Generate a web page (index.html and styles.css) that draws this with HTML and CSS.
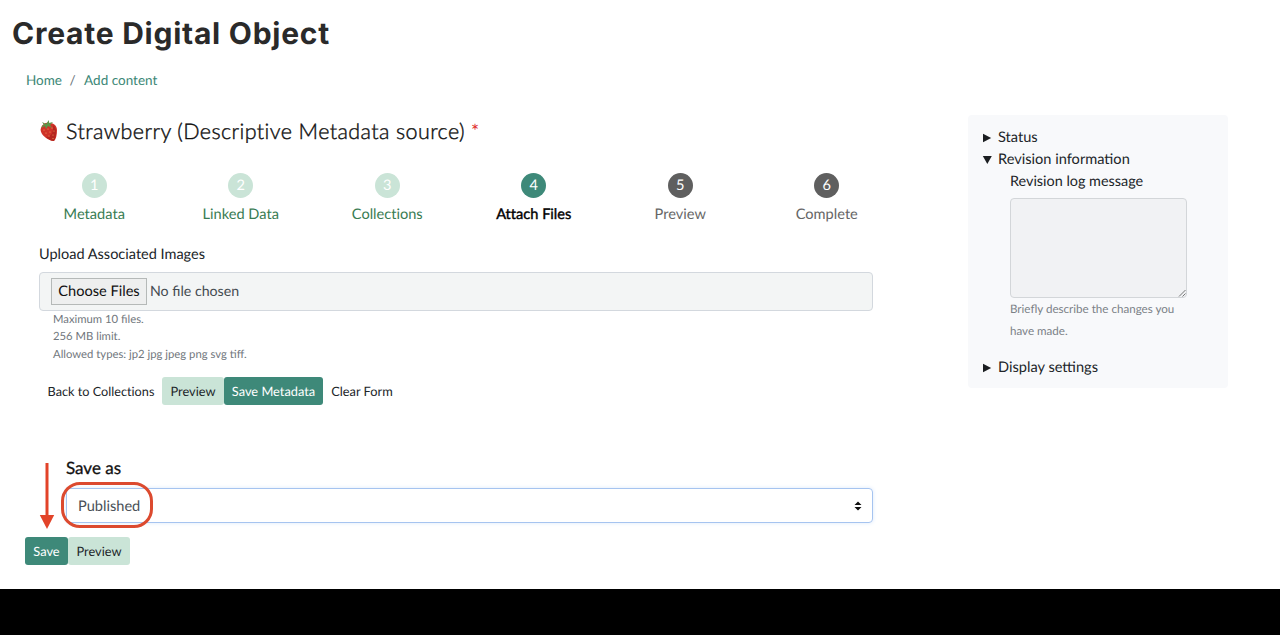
FILE: index.html
```html
<!DOCTYPE html>
<html lang="en">
<head>
<meta charset="utf-8">
<title>Create Digital Object</title>
<link rel="stylesheet" href="styles.css">
</head>
<body>
<div class="page">
  <h1 class="title"><span>Create Digital Object</span></h1>
  <nav class="breadcrumb"><a class="crumb-home">Home</a><span class="slash">/</span><a class="crumb-add">Add content</a></nav>
  <div class="layout">
    <main class="main">
      <h2 class="heading">
        <svg class="berry" width="20" height="22" viewBox="0 0 20 22">
          <path d="M2 8C3 4 7 2 11 3c4 0 7 3 7 7 0 5-1 9-3 11-4 0-9-3-12-7-1-2-2-4-1-6z" fill="#cf3328"/>
          <path d="M14 5c4 3 4 10 1 16-3 0-6-2-8-4 5 0 8-5 7-12z" fill="#b5261f"/>
          <path d="M1 5l4 0-2-3 4 2 3-4 0 3 4-1-3 3 2 3-4-2-2 3-1-3-4 2 2-3z" fill="#5c9448"/>
          <g fill="#f0a25a"><circle cx="5" cy="10" r=".6"/><circle cx="9" cy="9" r=".6"/><circle cx="13" cy="8" r=".6"/><circle cx="7" cy="13" r=".6"/><circle cx="11" cy="12" r=".6"/><circle cx="15" cy="11" r=".6"/><circle cx="10" cy="16" r=".6"/><circle cx="14" cy="15" r=".6"/><circle cx="14" cy="18.500" r=".6"/></g>
        </svg>
        <span class="heading-text">Strawberry (Descriptive Metadata source)</span><span class="required">*</span>
      </h2>
      <ol class="steps">
        <li class="step done"><span class="dot">1</span><span class="label">Metadata</span></li>
        <li class="step done"><span class="dot">2</span><span class="label">Linked Data</span></li>
        <li class="step done"><span class="dot">3</span><span class="label">Collections</span></li>
        <li class="step current"><span class="dot">4</span><span class="label">Attach Files</span></li>
        <li class="step"><span class="dot">5</span><span class="label">Preview</span></li>
        <li class="step"><span class="dot">6</span><span class="label">Complete</span></li>
      </ol>
      <div class="upload-label"><span>Upload Associated Images</span></div>
      <div class="file"><span class="choose">Choose Files</span><span class="nofile">No file chosen</span></div>
      <div class="hints"><div>Maximum 10 files.</div><div>256 MB limit.</div><div>Allowed types: jp2 jpg jpeg png svg tiff.</div></div>
      <div class="actions">
        <span class="btn back">Back to Collections</span><span class="btn soft preview-a">Preview</span><span class="btn solid save-meta">Save Metadata</span><span class="btn clear">Clear Form</span>
      </div>
      <div class="save-as"><span>Save as</span></div>
      <div class="select"><span class="value">Published</span>
        <svg width="8" height="10" viewBox="0 0 8 10"><path d="M4 .5L7.500 4H.5zM4 9.500L.5 6h7z" fill="#111"/></svg>
        <div class="ring"></div>
      </div>
    </main>
    <aside class="side">
      <div class="row"><svg class="tri" width="10" height="10" viewBox="0 0 10 10"><path d="M1 .8L9.200 5 1 9.200z"/></svg><span class="status">Status</span></div>
      <div class="row"><svg class="tri" width="10" height="10" viewBox="0 0 10 10"><path d="M.8 1h9L5.300 9z"/></svg><span>Revision information</span></div>
      <div class="revision">
        <div class="log-label">Revision log message</div>
        <div class="textarea"><svg width="8" height="8" viewBox="0 0 8 8"><path d="M1 7.500L7.500 1M4.500 7.500l3-3" stroke="#555" stroke-width=".8" fill="none"/></svg></div>
        <div class="help">Briefly describe the changes you<br>have made.</div>
      </div>
      <div class="row"><svg class="tri" width="10" height="10" viewBox="0 0 10 10"><path d="M1 .8L9.200 5 1 9.200z"/></svg><span class="display">Display settings</span></div>
    </aside>
  </div>
  <div class="footer-actions"><span class="btn solid save">Save</span><span class="btn soft preview-b">Preview</span></div>
  <svg class="arrow" width="16" height="68" viewBox="0 0 16 68"><path d="M8 1v53" stroke="#e24329" stroke-width="3"/><path d="M.8 53h14.400L8 67z" fill="#e24329"/></svg>
</div>
<div class="bottom"></div>
</body>
</html>
```
FILE: styles.css
```css
* { box-sizing: border-box; }
body { margin: 0; width: 1280px; height: 635px; overflow: hidden; background: #fff; color: #212529; font: 14.6px/22px Lato, sans-serif; text-rendering: geometricPrecision; display: flex; flex-direction: column; }
.page { height: 589px; flex: none; position: relative; white-space: nowrap; }
.bottom { flex: 1; background: #000; }
.title { margin: 0; padding: 14px 0 0 12px; font: 700 30px/40px Inter, sans-serif; color: #2a2a2a; letter-spacing: .75px; }
.breadcrumb { display: flex; padding: 16px 0 0 26px; height: 61px; font-size: 13.5px; line-height: 20px; color: #3c8776; }
.slash { color: #6c757d; padding: 0 8.5px 0 7.5px; }
.layout { display: flex; height: 422px; }
.main { width: 834px; margin-left: 39px; flex: none; }
.heading { margin: 0; height: 34px; display: flex; align-items: center; font-weight: 400; font-size: 21.5px; line-height: 32px; color: #111; }
.heading-text { font-weight: 300; -webkit-text-stroke: .4px #111; letter-spacing: .4px; margin-top: -3px; }
.berry { margin-right: 7px; margin-top: -3px; }
.required { color: #e02b2b; font-size: 19px; margin-left: 6px; }
.steps { list-style: none; padding: 0; margin: 24px -27px 0 -18px; height: 52px; display: flex; }
.step { flex: 1; display: flex; flex-direction: column; align-items: center; color: #666; }
.dot { width: 25px; height: 25px; border-radius: 50%; background: #5f5f5f; color: #fff; text-align: center; line-height: 25px; }
.label { margin-top: 6px; font-variant-ligatures: none; }
.done { color: #397c53; }
.done .dot { background: #cae4d7; }
.current { color: #000; }
.current .label { -webkit-text-stroke: .4px #000; }
.current .dot { background: #3e8979; }
.upload-label { margin-top: 19px; height: 28px; font-size: 14.5px; }
.file { height: 39px; border: 1px solid #d3d8de; border-radius: 4px; background: #f3f5f5; padding: 5px 11px; display: flex; align-items: center; color: #454b51; }
.choose { width: 96px; height: 27px; border: 1px solid #b5b9b8; background: #eeefef; text-align: center; line-height: 25px; color: #111; margin-right: 3px; }
.nofile { font-size: 14.2px; }
.hints { padding: 0 0 0 14px; height: 52px; font-size: 11.3px; line-height: 17.300px; color: #71777d; }
.actions { display: flex; margin-top: 14px; font-size: 13px; }
.btn { height: 28px; line-height: 28px; text-align: center; border-radius: 3px; color: #212529; font-size: 12.8px; font-variant-ligatures: none; }
.soft { background: #cae4d7; }
.solid { background: #3e8979; color: #fff; }
.back { width: 123px; padding-left: 1px; font-size: 12.7px; }
.preview-a { width: 62px; }
.save-meta { width: 99px; }
.clear { width: 78px; }
.save-as { margin: 51px 0 0 27px; height: 32px; font-size: 17px; line-height: 24px; color: #111; -webkit-text-stroke: .3px #111; }
.select { position: relative; margin-left: 27px; height: 35px; border: 1px solid #a6c4f0; border-radius: 4px; padding: 0 10px 0 11px; display: flex; align-items: center; justify-content: space-between; color: #495057; box-shadow: 0 0 4px #dce9fb; }
.value { padding-top: 2px; }
.ring { position: absolute; left: -6px; top: -7px; width: 92px; height: 46px; border: 3px solid #dc4a2f; border-radius: 19px; }
.side { width: 260px; height: 273px; margin-left: 95px; padding: 12px 14px; border-radius: 4px; background: #f8f9fb; }
.row { display: flex; align-items: center; height: 22px; }
.tri { margin-right: 6px; fill: #1b1e21; }
.revision { padding-left: 28px; height: 186px; }
.log-label { font-size: 14.4px; }
.textarea { width: 177px; height: 100px; margin-top: 5px; border: 1px solid #d3d6d9; border-radius: 4px; background: #f1f2f4; display: flex; align-items: flex-end; justify-content: flex-end; }
.help { margin-top: 1px; font-size: 11.6px; line-height: 22px; color: #7b8187; }
.footer-actions { display: flex; padding-left: 25px; }
.save { width: 43px; }
.preview-b { width: 62px; }
.arrow { position: absolute; left: 39px; top: 462px; }
```
